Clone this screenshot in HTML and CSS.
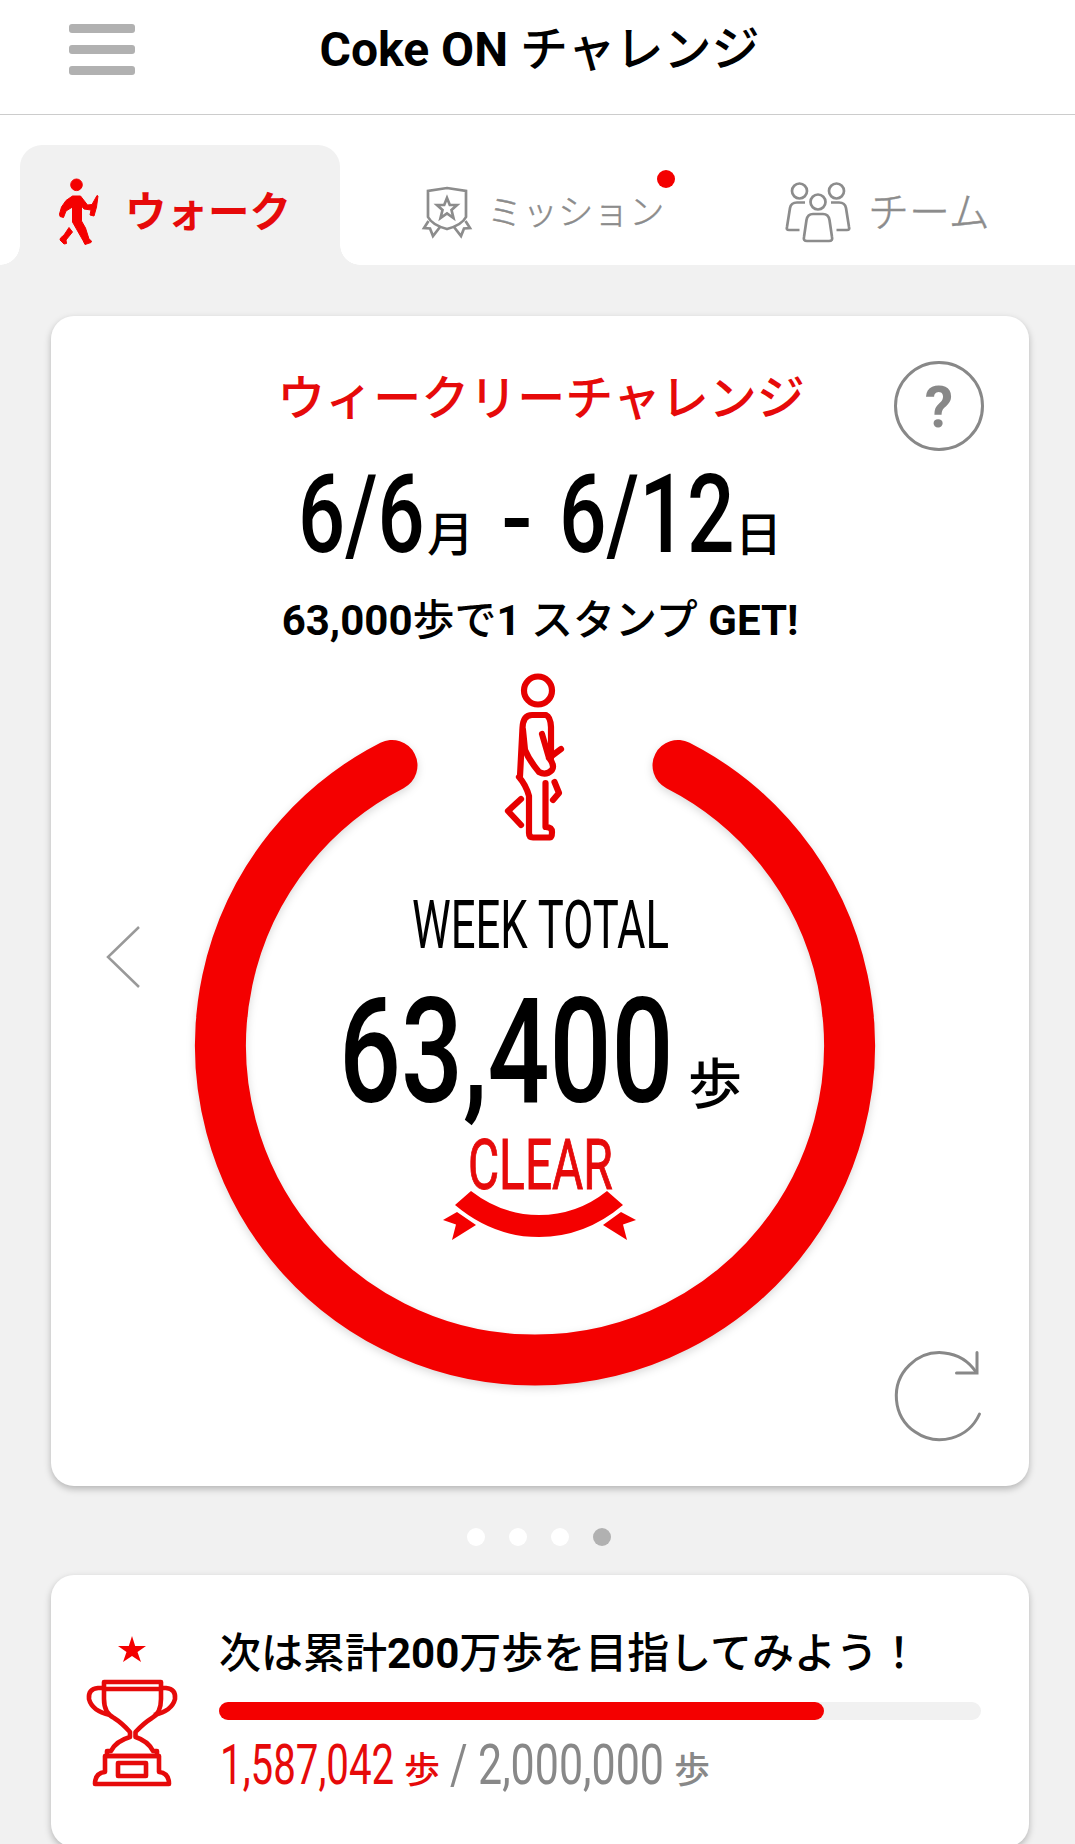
FILE: index.html
```html
<!DOCTYPE html>
<html lang="ja">
<head>
    <meta charset="UTF-8">
    <meta name="viewport" content="width=device-width, initial-scale=1.0">
    <title>Coke ON チャレンジ</title>
    <link rel="stylesheet" href="styles.css">
</head>
<body>
    <header class="header">
        <div class="menu">
            <span></span>
            <span></span>
            <span></span>
        </div>
        <h1><b>Coke ON</b> チャレンジ</h1>
    </header>

    <nav class="tabs">
        <div class="tab tab-walk active">
            <svg class="icon-walk" width="40" height="68" viewBox="0 0 40 68">
                <circle cx="17.5" cy="6.8" r="5.8"/>
                <path d="M13.500 18H21.500L28.500 27L33 26.500L38 17.500L39 18L37.500 29L35 38L31 37L32 32L25 31L22.500 28V43L26.500 50L30 61L32.500 63L32 64.500L26 66.500L24 62.500L13.500 44V29L7 33L4.500 39.500L1 38.500L.5 36L2.500 29L7 22.500Z"/>
                <path d="M10 49.500L13.500 54L7 62L7.500 65.500L5 66L1 62L1.500 60L5 57Z"/>
            </svg>
            <span>ウォーク</span>
        </div>
        <div class="tab tab-mission">
            <svg class="icon-line" width="50" height="52" viewBox="0 0 50 52">
                <path d="M25 2L44 5V31Q40 39 25 43Q10 39 6 31V5Z"/>
                <path d="M25 12L27.800 19H35L29.500 24L31.500 32L25 27.500L18.500 32L20.500 24L15 19H22.200Z"/>
                <path d="M6.500 35L2 42L8 42.500L11 50L18 41M43.500 35L48 42L42 42.500L39 50L32 41"/>
            </svg>
            <span>ミッション</span>
            <i class="badge"></i>
        </div>
        <div class="tab tab-team">
            <svg class="icon-line" width="66" height="62" viewBox="0 0 66 62">
                <circle cx="14.500" cy="10" r="7.500"/>
                <circle cx="51.500" cy="10" r="7.500"/>
                <circle cx="33" cy="21" r="7.500"/>
                <path d="M20 21.500H12Q6 21.500 5 27L2 46Q1 49 4 49H14.500M46 21.500H54Q60 21.500 61 27L64 46Q65 49 62 49H51.500"/>
                <path d="M28 33H38Q43.500 33 44.500 39L47 56Q48 60 44 60H22Q18 60 19 56L21.500 39Q22.500 33 28 33Z"/>
            </svg>
            <span>チーム</span>
        </div>
    </nav>

    <main>
        <section class="card weekly">
            <div class="help">?</div>
            <h2>ウィークリーチャレンジ</h2>
            <svg class="period" width="480" height="100" viewBox="0 0 480 100">
                <text class="num" transform="translate(-2 90) scale(.75 1)" font-size="109" textLength="169" lengthAdjust="spacingAndGlyphs">6/6</text>
                <text class="kanji" x="127" y="89" font-size="47">月</text>
                <text class="hyphen" transform="translate(200 85)" font-size="82" textLength="34" lengthAdjust="spacingAndGlyphs">-</text>
                <text class="num" transform="translate(259 90) scale(.75 1)" font-size="109" textLength="234" lengthAdjust="spacingAndGlyphs">6/12</text>
                <text class="kanji" x="435" y="89" font-size="47">日</text>
            </svg>
            <p class="goal"><b>63,000</b>歩で<b>1</b> スタンプ <b>GET!</b></p>

            <svg class="ring" width="720" height="740" viewBox="175 660 720 740">
                <path class="ring-arc" d="M392 765.500A314.500 314.500 0 1 0 678 765.500"/>
                <g class="walker">
                    <circle cx="538" cy="690.500" r="14"/>
                    <path d="M520 776L522.500 728Q523 715 532 715H546Q550.500 717 551 727V758"/>
                    <path d="M542 734L549 758L561 749M549 758Q555 765 552 770Q546 776 539 772Q529 760 525 750L523 730"/>
                    <path d="M519 777Q526 785 529 796V833Q529 837.500 533 837.500H550Q552 837.500 552 832Q552 827 545.500 827V783"/>
                    <path d="M554.500 782L559 793L553 800M521 799L508 811L521 825"/>
                </g>
                <text class="label" transform="translate(412 948) scale(.72 1)" font-size="66" textLength="357" lengthAdjust="spacingAndGlyphs">WEEK TOTAL</text>
                <text class="num" transform="translate(339 1102) scale(.75 1)" font-size="147" textLength="446" lengthAdjust="spacingAndGlyphs">63,400</text>
                <text class="kanji strong" x="688" y="1104" font-size="54">歩</text>
                <text class="clear" transform="translate(468 1189) scale(.72 1)" font-size="70" textLength="201" lengthAdjust="spacingAndGlyphs">CLEAR</text>
                <g class="ribbon">
                    <path d="M471 1191Q502 1215 539 1215Q577 1215 607 1191L623 1205Q585 1237 539 1237Q493 1237 455 1205Z"/>
                    <path d="M457 1212L443 1220L456 1224.500L452 1240L476 1225ZM621 1212L636 1220L623 1224.500L627 1240L603 1225Z"/>
                </g>
            </svg>

            <svg class="prev" width="36" height="64" viewBox="0 0 36 64">
                <path d="M34 2L3 32L34 62"/>
            </svg>
            <svg class="refresh" width="92" height="94" viewBox="0 0 92 94">
                <path d="M85.500 65A43.500 43.500 0 1 1 82 23"/>
                <path d="M83 3.500V24H62.500"/>
            </svg>
        </section>

        <div class="dots">
            <i></i>
            <i></i>
            <i></i>
            <i class="current"></i>
        </div>

        <section class="card total">
            <svg class="trophy" width="92" height="154" viewBox="0 0 92 154">
                <path class="star" d="M46 1L49.200 11H60L51.500 17L55 27L46 21L37 27L40.500 17L32 11H42.800Z"/>
                <path d="M18 47H75V64Q75 78 66 83Q58 88 49.500 97V102Q62 106 67 116H71V121H21V116H25Q30 106 44 102V97Q36 88 28 83Q18 78 18 64Z"/>
                <path d="M18 54H75M18 53H12Q2 54 3 64Q6 76 24 80M75 53H80Q90 54 89 64Q86 76 68 80"/>
                <path d="M19 121H73V137Q83 138 83 149H9Q9 138 19 137Z"/>
                <path d="M32 128H60V141H32Z"/>
            </svg>
            <div class="total-body">
                <p class="next">次は累計<b>200</b>万歩を目指してみよう！</p>
                <div class="bar"><div class="bar-fill" style="width: 79.35%"></div></div>
                <svg class="steps" width="520" height="60" viewBox="0 0 520 60">
                    <g class="steps-now">
                        <text transform="translate(1 49) scale(.72 1)" font-size="55" textLength="242" lengthAdjust="spacingAndGlyphs">1,587,042</text>
                        <text class="kanji strong" x="185" y="48" font-size="36">歩</text>
                    </g>
                    <g class="steps-goal">
                        <text transform="translate(231 49) scale(.8 1)" font-size="55" textLength="22" lengthAdjust="spacingAndGlyphs">/</text>
                        <text transform="translate(259 49) scale(.75 1)" font-size="55" textLength="248" lengthAdjust="spacingAndGlyphs">2,000,000</text>
                        <text class="kanji" x="455" y="48" font-size="36">歩</text>
                    </g>
                </svg>
            </div>
        </section>
    </main>
</body>
</html>
```
FILE: styles.css
```css
* {
    margin: 0;
    padding: 0;
    box-sizing: border-box;
}

body {
    width: 1075px;
    height: 1844px;
    overflow: hidden;
    background: #f1f1f1;
    color: #000;
    font-family: Roboto, 'Noto Sans CJK JP', sans-serif;
    font-weight: 500;
}

svg {
    display: block;
    overflow: visible;
}

/* header */
.header {
    display: flex;
    align-items: flex-start;
    height: 115px;
    padding: 24px 69px 0;
    background: #fff;
    border-bottom: 1px solid #ccc;
}

.menu {
    display: flex;
    flex-direction: column;
    gap: 12px;
    width: 66px;
}

.menu span {
    height: 9px;
    border-radius: 3px;
    background: #b1b1b1;
}

h1 {
    flex: 1;
    margin-right: 62px;
    font-size: 48px;
    line-height: 52px;
    font-weight: 500;
    text-align: center;
    white-space: nowrap;
}

/* tabs */
.tabs {
    display: flex;
    height: 150px;
    padding: 30px 0 0 20px;
    background: #fff;
    color: #8c8c8c;
}

.tab {
    position: relative;
    display: flex;
    align-items: center;
    height: 120px;
    padding-top: 14px;
    font-weight: 300;
    white-space: nowrap;
}

.tab span {
    padding-bottom: 6px;
    -webkit-text-stroke: 0.4px currentColor;
}

.tab-walk {
    width: 320px;
    padding-left: 39px;
    gap: 26px;
    font-size: 41.5px;
}

.tab-mission {
    width: 363px;
    padding-left: 82px;
    gap: 15px;
    font-size: 35.5px;
}

.tab-team {
    padding-left: 82px;
    gap: 17px;
    font-size: 41px;
}

.tab.active {
    background: #f1f1f1;
    border-radius: 22px 22px 0 0;
    color: #e60a0a;
    font-weight: 700;
}

.tab.active span {
    -webkit-text-stroke: 0;
}

.tab.active::before,
.tab.active::after {
    content: '';
    position: absolute;
    bottom: 0;
    width: 20px;
    height: 20px;
}

.tab.active::before {
    left: -20px;
    background: radial-gradient(circle at 0 0, transparent 19.5px, #f1f1f1 20px);
}

.tab.active::after {
    right: -20px;
    background: radial-gradient(circle at 100% 0, transparent 19.5px, #f1f1f1 20px);
}

.icon-walk {
    fill: #f40000;
    stroke: #f40000;
    stroke-width: 1;
    stroke-linejoin: round;
}

.icon-line {
    fill: none;
    stroke: #8c8c8c;
    stroke-width: 2.7;
}

.badge {
    position: absolute;
    top: 25px;
    left: 317px;
    width: 18px;
    height: 18px;
    border-radius: 50%;
    background: #f40000;
}

/* cards */
main {
    padding: 51px 46px 0 51px;
}

.card {
    position: relative;
    background: #fff;
    border-radius: 23px;
    box-shadow: 0 3px 7px rgba(0, 0, 0, 0.25);
}

.weekly {
    height: 1170px;
    padding-top: 52px;
}

.weekly h2 {
    color: #e60a0a;
    font-size: 48px;
    line-height: 62px;
    font-weight: 500;
    padding-left: 2px;
    text-align: center;
}

.help {
    position: absolute;
    top: 45px;
    right: 45px;
    width: 90px;
    height: 90px;
    border: 3px solid #888;
    border-radius: 50%;
    color: #888;
    font-size: 57px;
    line-height: 87px;
    font-weight: 700;
    text-align: center;
}

.period {
    margin: 32px 0 0 249px;
}

.num,
.label,
.clear,
.steps {
    font-family: Roboto, sans-serif;
    font-weight: 400;
}

.num {
    font-weight: 500;
}

.hyphen {
    font-weight: 700;
}

.kanji {
    font-family: 'Noto Sans CJK JP', sans-serif;
    font-weight: 500;
}

.goal {
    margin-top: 29px;
    font-size: 42px;
    line-height: 60px;
    text-align: center;
}

.ring {
    margin: 9px 0 0 124px;
}

.ring-arc {
    fill: none;
    stroke: #f40000;
    stroke-width: 51;
    stroke-linecap: round;
    filter: drop-shadow(0 3px 4px rgba(0, 0, 0, 0.15));
}

.walker {
    fill: none;
    stroke: #e60000;
    stroke-width: 6.2;
    stroke-linecap: round;
    stroke-linejoin: round;
}

.clear {
    fill: #e60a0a;
    stroke: #e60a0a;
    stroke-width: 1;
}

.ribbon {
    fill: #f40000;
}

.prev,
.refresh {
    position: absolute;
    fill: none;
    stroke: #888;
    stroke-width: 2.5;
}

.prev {
    left: 54px;
    top: 609px;
    stroke: #999;
}

.refresh {
    left: 843px;
    top: 1033px;
    stroke-width: 3;
    stroke-linecap: round;
}

.dots {
    display: flex;
    gap: 24px;
    height: 89px;
    padding: 42px 0 0 416px;
}

.dots i {
    width: 18px;
    height: 18px;
    border-radius: 50%;
    background: #fff;
}

.dots .current {
    background: #b1b1b1;
}

/* lifetime steps */
.total {
    display: flex;
    gap: 41px;
    height: 272px;
    padding: 49px 48px 0 35px;
}

.trophy {
    flex: none;
    margin-top: 11px;
    fill: none;
    stroke: #e60a0a;
    stroke-width: 4.6;
    stroke-linejoin: round;
}

.trophy .star {
    fill: #f40000;
    stroke: none;
}

.total-body {
    flex: 1;
}

.next {
    font-size: 42px;
    line-height: 60px;
    white-space: nowrap;
}

.bar {
    height: 18px;
    margin-top: 18px;
    border-radius: 9px;
    background: #f1f1f1;
}

.bar-fill {
    height: 18px;
    border-radius: 9px;
    background: #f40000;
}

.steps {
    margin-top: 15px;
}

.steps-now {
    fill: #e60a0a;
}

.steps-goal {
    fill: #888;
}
```
